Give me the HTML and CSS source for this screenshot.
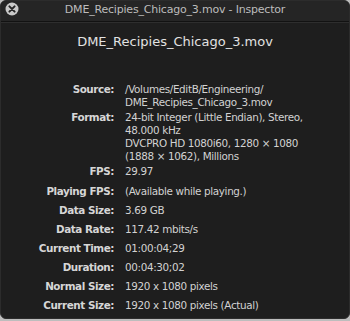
FILE: index.html
```html
<!DOCTYPE html>
<html lang="en">
<head>
    <meta charset="UTF-8">
    <title>Inspector</title>
    <link rel="stylesheet" href="styles.css">
</head>
<body>
    <div class="inspector">
        <div class="title-bar">
            <span class="close-btn">
                <svg width="14" height="14" viewBox="0 0 14 14">
                    <circle cx="7" cy="7" r="6.5" fill="#c9c9c9"/>
                    <path d="M4.4 4.4 L9.6 9.6 M9.6 4.4 L4.4 9.6" stroke="#262626" stroke-width="2" stroke-linecap="round"/>
                </svg>
            </span>
            <span class="title-text">DME_Recipies_Chicago_3.mov - Inspector</span>
        </div>

        <div class="content">
            <h1 class="file-name">DME_Recipies_Chicago_3.mov</h1>

            <div class="info-list top">
                <div class="label">Source:</div>
                <div class="value">/Volumes/EditB/Engineering/<br>DME_Recipies_Chicago_3.mov</div>

                <div class="label">Format:</div>
                <div class="value">24-bit Integer (Little Endian), Stereo,<br>48.000 kHz<br>DVCPRO HD 1080i60, 1280 × 1080<br>(1888 × 1062), Millions</div>

                <div class="label">FPS:</div>
                <div class="value">29.97</div>
            </div>

            <div class="info-list bottom">
                <div class="label">Playing FPS:</div>
                <div class="value">(Available while playing.)</div>

                <div class="label">Data Size:</div>
                <div class="value">3.69 GB</div>

                <div class="label">Data Rate:</div>
                <div class="value">117.42 mbits/s</div>

                <div class="label">Current Time:</div>
                <div class="value">01:00:04;29</div>

                <div class="label">Duration:</div>
                <div class="value">00:04:30;02</div>

                <div class="label">Normal Size:</div>
                <div class="value">1920 x 1080 pixels</div>

                <div class="label">Current Size:</div>
                <div class="value">1920 x 1080 pixels (Actual)</div>
            </div>
        </div>
    </div>
</body>
</html>
```

FILE: styles.css
```css
* {
    margin: 0;
    padding: 0;
    box-sizing: border-box;
}

body {
    width: 350px;
    height: 321px;
    background: #bdbdbd;
    font-family: "DejaVu Sans", "Liberation Sans", sans-serif;
    overflow: hidden;
}

.inspector {
    width: 350px;
    height: 319px;
    background: #1e1e1e;
    border-radius: 6px;
    border: 1px solid #2c2c2c;
    overflow: hidden;
}

.title-bar {
    height: 21px;
    background: #252525;
    border-bottom: 1px solid #121212;
    box-shadow: 0 1px 0 #2e2e2e;
    display: flex;
    align-items: center;
    justify-content: center;
    position: relative;
}

.close-btn {
    position: absolute;
    left: 4px;
    top: 1px;
    width: 14px;
    height: 14px;
}

.close-btn svg {
    display: block;
}

.title-text {
    color: #bcbcbc;
    font-size: 11px;
    letter-spacing: -0.2px;
    margin-top: -4px;
}

.content {
    padding-top: 12px;
}

.file-name {
    text-align: center;
    color: #e2e2e2;
    font-size: 13px;
    font-weight: normal;
    line-height: 16px;
    margin-bottom: 33px;
}

.info-list {
    display: grid;
    grid-template-columns: 113px 1fr;
    column-gap: 11px;
    font-size: 10.4px;
    line-height: 13px;
}

.info-list.top {
    row-gap: 2px;
}

.info-list.bottom {
    margin-top: 7px;
    grid-auto-rows: 19px;
}

.label {
    text-align: right;
    font-weight: bold;
    letter-spacing: -0.45px;
    color: #d6d6d6;
}

.value {
    letter-spacing: -0.35px;
    color: #d2d2d2;
}
```
